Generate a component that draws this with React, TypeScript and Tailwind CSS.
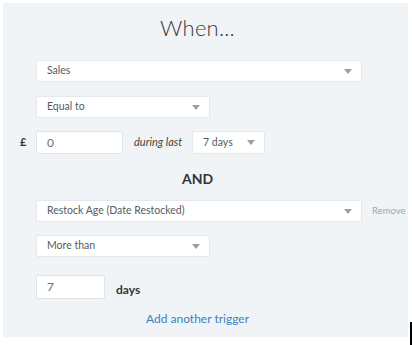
import React from 'react';

const font = { fontFamily: 'Lato, "Open Sans", Arial, sans-serif' };

const Caret = () => (
  <svg width="8" height="5" viewBox="0 0 8 5" className="shrink-0">
    <path d="M0 0 L8 0 L4 5 Z" fill="#9a9fa5" />
  </svg>
);

const SelectBox: React.FC<{ label: string; width: string; height?: string }> = ({ label, width, height = 'h-[22px]' }) => (
  <div
    className={`${width} ${height} bg-white rounded-[2px] border border-[#e4e8ec] flex items-center justify-between pl-[10px] pr-[9px] text-[10.5px] text-[#555b61]`}
  >
    <span>{label}</span>
    <Caret />
  </div>
);

const InputBox: React.FC<{ value: string; width: string; height?: string }> = ({ value, width, height = 'h-[22px]' }) => (
  <div
    className={`${width} ${height} bg-white rounded-[2px] border border-[#e0e4e8] flex items-center pl-[10px] text-[12px] text-[#6a7076]`}
  >
    {value}
  </div>
);

export default function App() {
  return (
    <div className="relative w-[412px] h-[345px] bg-white overflow-hidden" style={font}>
      <div className="ml-[3px] mt-[3px] w-[405px] h-[334px] bg-[#f1f4f7] flex flex-col">
        <h1 className="mt-[11px] pr-[16px] h-[28px] text-center text-[22px] leading-[28px] font-light text-[#3a3d40] tracking-[0.2px]">
          When...
        </h1>
        <div className="mt-[18px] pl-[33px]">
          <SelectBox label="Sales" width="w-[326px]" />
        </div>
        <div className="mt-[14px] pl-[33px]">
          <SelectBox label="Equal to" width="w-[174px]" />
        </div>
        <div className="mt-[13px] flex items-center h-[23px]">
          <span className="w-[33px] pl-[17px] text-[11px] font-bold text-[#333]">£</span>
          <InputBox value="0" width="w-[87px]" height="h-[23px]" />
          <span className="ml-[11px] text-[11px] italic text-[#444]">during last</span>
          <div className="ml-[10px]">
            <SelectBox label="7 days" width="w-[73px]" height="h-[23px]" />
          </div>
        </div>
        <div className="mt-[16px] pr-[16px] h-[18px] text-center text-[14px] leading-[18px] font-bold text-[#333]">AND</div>
        <div className="mt-[12px] pl-[33px] flex items-center">
          <SelectBox label="Restock Age (Date Restocked)" width="w-[326px]" />
          <span className="ml-[10px] text-[9.5px] text-[#9aa6b3]">Remove</span>
        </div>
        <div className="mt-[13px] pl-[33px]">
          <SelectBox label="More than" width="w-[174px]" />
        </div>
        <div className="mt-[18px] pl-[33px] flex items-center">
          <InputBox value="7" width="w-[69px]" height="h-[24px]" />
          <span className="ml-[11px] mt-[6px] text-[12px] font-bold text-[#333]">days</span>
        </div>
        <div className="mt-[11px] pr-[16px] text-center text-[12px] text-[#3b7fc0]">Add another trigger</div>
      </div>
      <div className="absolute left-[410px] top-[322px] w-[2px] h-[23px] bg-black" />
    </div>
  );
}
